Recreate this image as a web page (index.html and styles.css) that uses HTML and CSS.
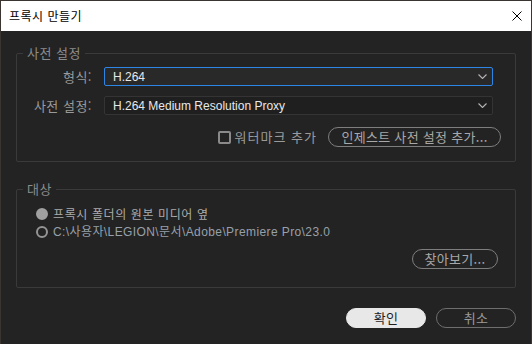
FILE: index.html
```html
<!DOCTYPE html>
<html lang="ko">

<head>
  <meta charset="UTF-8">
  <meta name="viewport" content="width=device-width, initial-scale=1.0">
  <title>프록시 만들기</title>
  <link rel="stylesheet" href="styles.css">
</head>

<body>
  <div class="dialog">
    <div class="titlebar">
      <span class="title">프록시 만들기</span>
      <svg class="close" width="10" height="10" viewBox="0 0 10 10">
        <path d="M0.5 0.5 L9.5 9.5 M9.5 0.5 L0.5 9.5" stroke="#000" stroke-width="1" fill="none" />
      </svg>
    </div>

    <div class="content">
      <div class="group group-preset">
        <div class="group-title">사전 설정</div>
        <div class="field-row">
          <label class="field-label">형식:</label>
          <div class="select select-active">
            <span>H.264</span>
            <svg class="chevron" width="9" height="5" viewBox="0 0 9 5">
              <polyline points="0.5,0.5 4.5,4.5 8.5,0.5" stroke="#b5b5b5" stroke-width="1.1" fill="none" />
            </svg>
          </div>
        </div>
        <div class="field-row">
          <label class="field-label">사전 설정:</label>
          <div class="select">
            <span>H.264 Medium Resolution Proxy</span>
            <svg class="chevron" width="9" height="5" viewBox="0 0 9 5">
              <polyline points="0.5,0.5 4.5,4.5 8.5,0.5" stroke="#b5b5b5" stroke-width="1.1" fill="none" />
            </svg>
          </div>
        </div>
        <div class="option-row">
          <label class="check">
            <span class="check-box"></span>
            <span>워터마크 추가</span>
          </label>
          <button type="button" class="pill-btn btn-ingest">인제스트 사전 설정 추가...</button>
        </div>
      </div>

      <div class="group group-target">
        <div class="group-title">대상</div>
        <div class="radio-row">
          <span class="radio radio-on"></span>
          <span class="radio-text">프록시 폴더의 원본 미디어 옆</span>
        </div>
        <div class="radio-row">
          <span class="radio"></span>
          <span class="radio-text path">C:\사용자\LEGION\문서\Adobe\Premiere Pro\23.0</span>
        </div>
        <div class="browse-row">
          <button type="button" class="pill-btn btn-browse">찾아보기...</button>
        </div>
      </div>

      <div class="actions">
        <button type="button" class="pill-btn btn-ok">확인</button>
        <button type="button" class="pill-btn btn-cancel">취소</button>
      </div>
    </div>
  </div>
</body>

</html>
```

FILE: styles.css
```css
html,
body {
  margin: 0;
  padding: 0;
  background: #232323;
}

.dialog {
  width: 532px;
  height: 344px;
  box-sizing: border-box;
  border: 1px solid #3b3531;
  border-bottom: none;
  background: #232323;
  font-family: "Noto Sans CJK KR", "Liberation Sans", sans-serif;
  letter-spacing: 0.5px;
}

.titlebar {
  height: 30px;
  background: #ffffff;
  display: flex;
  align-items: center;
  justify-content: space-between;
  padding: 0 9px 0 8px;
}

.title {
  font-size: 12px;
  line-height: 16px;
  color: #000;
}

.close {
  display: block;
}

.content {
  padding: 22px 15px 0 15px;
}

.group {
  border: 1px solid #3a3a3a;
  border-radius: 2px;
}

.group-title {
  width: fit-content;
  margin: -9px 0 0 6px;
  padding: 0 4px;
  background: #232323;
  font-size: 13px;
  line-height: 16px;
  color: #8c8c8c;
}

.group-preset {
  height: 107px;
}

.field-row {
  display: grid;
  grid-template-columns: 75px 1fr;
  column-gap: 12px;
  align-items: center;
  margin-right: 22px;
}

.field-row:nth-of-type(2) {
  margin-top: 6px;
}

.field-row + .field-row {
  margin-top: 10px;
}

.field-label {
  text-align: right;
  font-size: 13px;
  line-height: 16px;
  color: #9a9a9a;
}

.select {
  height: 19px;
  box-sizing: border-box;
  border: 1px solid #343434;
  border-radius: 2px;
  background: #1f1f1f;
  display: flex;
  align-items: center;
  justify-content: space-between;
  padding: 0 5px 0 8px;
  font-family: "Liberation Sans", "Noto Sans CJK KR", sans-serif;
  font-size: 12px;
  letter-spacing: 0;
  color: #e8e8e8;
}

.select-active {
  border-color: #2d86e6;
  background: #292929;
}

.chevron {
  display: block;
}

.option-row {
  display: flex;
  justify-content: flex-end;
  align-items: center;
  margin: 12px 14px 0 0;
}

.check {
  display: flex;
  align-items: center;
  gap: 4px;
  font-size: 13px;
  line-height: 16px;
  letter-spacing: 1px;
  color: #9a9a9a;
  margin-right: 11px;
}

.check-box {
  width: 13px;
  height: 13px;
  box-sizing: border-box;
  border: 2px solid #8a8a8a;
  border-radius: 2px;
}

.pill-btn {
  height: 20px;
  box-sizing: border-box;
  border: 1px solid #7e7e7e;
  border-radius: 10px;
  background: transparent;
  font-family: "Noto Sans CJK KR", "Liberation Sans", sans-serif;
  font-size: 13px;
  line-height: 16px;
  letter-spacing: 0.3px;
  color: #a8a8a8;
  padding: 0 6px;
  white-space: nowrap;
  cursor: pointer;
}

.btn-ingest {
  width: 173px;
}

.group-target {
  margin-top: 27px;
  height: 97px;
}

.radio-row {
  display: flex;
  align-items: center;
  gap: 5px;
  height: 18px;
  padding-left: 19px;
}

.group-target .group-title + .radio-row {
  margin-top: 8px;
}

.radio {
  width: 12px;
  height: 12px;
  box-sizing: border-box;
  border: 2px solid #959595;
  border-radius: 50%;
}

.radio-on {
  background: #a0a0a0;
  border-color: #a0a0a0;
}

.radio-text {
  font-size: 12px;
  line-height: 16px;
  letter-spacing: 0.6px;
  color: #ababab;
}

.path {
  font-family: "Liberation Sans", "Noto Sans CJK KR", sans-serif;
  font-size: 12px;
  letter-spacing: 0.4px;
  color: #97a0aa;
}

.browse-row {
  display: flex;
  justify-content: flex-end;
  margin: 8px 17px 0 0;
}

.btn-browse {
  width: 86px;
}

.actions {
  display: flex;
  justify-content: flex-end;
  gap: 10px;
  margin-top: 20px;
}

.btn-ok,
.btn-cancel {
  width: 80px;
}

.btn-ok {
  background: #e8e8e8;
  border-color: #e8e8e8;
  color: #1e1e1e;
}

.btn-cancel {
  color: #9a9a9a;
  border-color: #6e6e6e;
}
```
